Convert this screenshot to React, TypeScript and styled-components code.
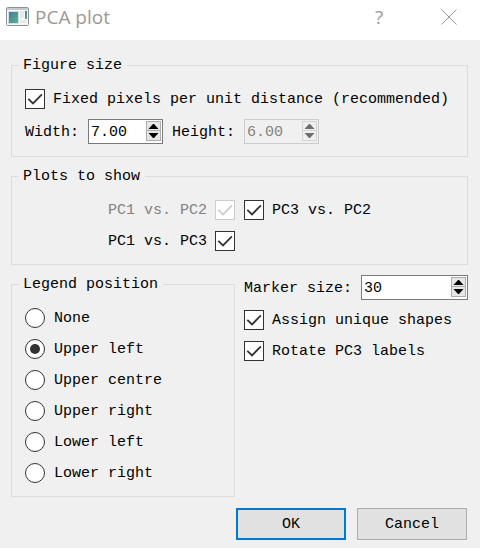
import React from "react";
import styled, { createGlobalStyle } from "styled-components";

const GlobalStyle = createGlobalStyle`
  *, *::before, *::after { box-sizing: border-box; }
  html { background: #f0f0f0; }
  body {
    margin: 0;
    background: #f0f0f0;
    color: #000;
    font-family: "Liberation Mono", monospace;
    font-size: 15px;
    line-height: 18px;
  }
`;

const TitleBar = styled.header`
  display: flex;
  align-items: center;
  height: 40px;
  padding: 0 23px 6px 6px;
  background: #fff;
  color: #999;
`;

const Title = styled.h1`
  flex: 1;
  margin: 0 0 0 6px;
  font: 400 19px/28px "Open Sans", sans-serif;
`;

const TitleButton = styled.button`
  display: flex;
  align-items: center;
  justify-content: center;
  width: 16px;
  height: 28px;
  margin-left: 54px;
  padding: 0;
  border: 0;
  background: none;
  color: #999;
  font: 400 19px/28px "Open Sans", sans-serif;
`;

const Form = styled.form`
  display: flex;
  flex-direction: column;
  gap: 10px;
  padding: 16px 12px 8px 11px;
`;

const Group = styled.fieldset<{ $bottom: number }>`
  min-width: 0;
  margin: 0;
  padding: 15px 13px ${(p) => p.$bottom}px;
  border: 1px solid #dcdcdc;
`;

const GroupTitle = styled.legend`
  margin-left: -6px;
  padding: 2px 5px 0 4px;
  line-height: 16px;
`;

const Stack = styled.div<{ $gap: number }>`
  display: flex;
  flex-direction: column;
  gap: ${(p) => p.$gap}px;
`;

const FieldRow = styled.div`
  display: flex;
  align-items: center;
  gap: 9px;
`;

const FieldLabel = styled.label`
  padding-top: 2px;
`;

const Columns = styled.div`
  display: grid;
  grid-template-columns: 1fr 1fr;
  column-gap: 9px;
  align-items: start;
`;

const PlotGrid = styled(Columns)`
  row-gap: 11px;
`;

const Choice = styled.label<{ $end?: boolean; $disabled?: boolean }>`
  display: flex;
  align-items: center;
  justify-content: ${(p) => (p.$end ? "flex-end" : "flex-start")};
  gap: 8px;
  height: 20px;
  white-space: nowrap;
  color: ${(p) => (p.$disabled ? "#838383" : "#000")};
`;

const RadioChoice = styled(Choice)`
  gap: 9px;
`;

const ChoiceText = styled.span`
  padding-top: 2px;
`;

const Mark = styled.span`
  display: grid;
  flex: none;
  width: 20px;
  height: 20px;

  > * {
    grid-area: 1 / 1;
  }

  > svg {
    pointer-events: none;
    visibility: hidden;
  }

  > input:checked + svg {
    visibility: visible;
  }
`;

const CheckInput = styled.input`
  appearance: none;
  width: 20px;
  height: 20px;
  margin: 0;
  border: 1px solid #333;
  background: #fff;

  &:disabled {
    border-color: #ccc;
  }
`;

const RadioInput = styled.input`
  appearance: none;
  display: grid;
  place-content: center;
  flex: none;
  width: 20px;
  height: 20px;
  margin: 0;
  border: 1px solid #333;
  border-radius: 50%;
  background: #fff;

  &:checked::before {
    content: "";
    width: 10px;
    height: 10px;
    border-radius: 50%;
    background: #333;
  }
`;

const SpinFrame = styled.span<{ $grow?: boolean; $disabled?: boolean }>`
  display: flex;
  flex: ${(p) => (p.$grow ? "1" : "none")};
  width: ${(p) => (p.$grow ? "auto" : "75px")};
  min-width: 0;
  height: 25px;
  padding: 1px 1px 2px 2px;
  border: 1px solid ${(p) => (p.$disabled ? "#ccc" : "#7a7a7a")};
  background: ${(p) => (p.$disabled ? "#f0f0f0" : "#fff")};
`;

const SpinInput = styled.input`
  appearance: textfield;
  flex: 1;
  width: 0;
  min-width: 0;
  margin: 0;
  padding: 4px 0 0;
  border: 0;
  outline: 0;
  background: transparent;
  color: #000;
  font: inherit;

  &::-webkit-inner-spin-button {
    appearance: none;
    margin: 0;
  }

  &:disabled {
    color: #838383;
  }
`;

const Steppers = styled.span`
  display: grid;
  grid-template-rows: 1fr 1fr;
  width: 15px;
`;

const Stepper = styled.button`
  display: grid;
  place-content: center;
  min-height: 0;
  padding: 0;
  border: 1px solid #adadad;
  background: #e6e6e6;
  color: #000;

  & + & {
    border-top: 0;
  }

  &:disabled {
    border-color: #d4d4d4;
    background: #efefef;
    color: #6d6d6d;
  }
`;

const Actions = styled.div`
  display: flex;
  justify-content: flex-end;
  gap: 11px;
  padding: 1px 1px 0 0;
`;

const ActionButton = styled.button<{ $primary?: boolean }>`
  width: 110px;
  height: 32px;
  padding: 2px 0 0;
  border: ${(p) => (p.$primary ? "2px solid #0078d7" : "1px solid #adadad")};
  background: #e1e1e1;
  color: #000;
  font: inherit;
`;

function WindowIcon() {
  return (
    <svg width="23" height="20" viewBox="0 0 23 20" aria-hidden="true">
      <defs>
        <linearGradient id="pane" x1="0" y1="0" x2="1" y2="1">
          <stop offset="0" stopColor="#3d79a0" />
          <stop offset="1" stopColor="#62b489" />
        </linearGradient>
      </defs>
      <rect x="0.5" y="0.5" width="22" height="18" rx="1" fill="#f8f8f8" stroke="#8b9199" />
      <rect x="1" y="1" width="21" height="2" fill="#c3c9cf" />
      <rect x="2.5" y="4.5" width="10" height="12" fill="url(#pane)" stroke="#d3e0e0" />
      <rect x="14" y="4" width="4" height="7" fill="#e8eae6" />
      <rect x="19" y="4" width="2" height="8" fill="url(#pane)" />
      <rect x="14" y="13" width="7" height="3" fill="#e8eae6" />
    </svg>
  );
}

function Checkbox({ label, before, disabled }: { label: string; before?: boolean; disabled?: boolean }) {
  return (
    <Choice $end={before} $disabled={disabled}>
      {before && <ChoiceText>{label}</ChoiceText>}
      <Mark>
        <CheckInput type="checkbox" defaultChecked disabled={disabled} />
        <svg width="20" height="20" viewBox="0 0 20 20" fill="none" stroke={disabled ? "#ccc" : "#333"} strokeWidth="1.8">
          <path d="M3.3 9.8 L8 14.4 L16.9 5.4" />
        </svg>
      </Mark>
      {!before && <ChoiceText>{label}</ChoiceText>}
    </Choice>
  );
}

type SpinProps = { id: string; value: string; step: string; disabled?: boolean; grow?: boolean };

function SpinBox({ id, value, step, disabled, grow }: SpinProps) {
  const input = React.useRef<HTMLInputElement>(null);
  return (
    <SpinFrame $grow={grow} $disabled={disabled}>
      <SpinInput ref={input} id={id} type="number" step={step} defaultValue={value} disabled={disabled} />
      <Steppers>
        <Stepper type="button" aria-label="Increase" disabled={disabled} onClick={() => input.current?.stepUp()}>
          <svg width="11" height="5" viewBox="0 0 11 5">
            <path d="M0.5 5 L5 0 H6 L10.5 5 Z" fill="currentColor" />
          </svg>
        </Stepper>
        <Stepper type="button" aria-label="Decrease" disabled={disabled} onClick={() => input.current?.stepDown()}>
          <svg width="11" height="5" viewBox="0 0 11 5">
            <path d="M0.5 0 L5 5 H6 L10.5 0 Z" fill="currentColor" />
          </svg>
        </Stepper>
      </Steppers>
    </SpinFrame>
  );
}

const positions = ["None", "Upper left", "Upper centre", "Upper right", "Lower left", "Lower right"];

export default function App() {
  return (
    <>
      <GlobalStyle />
      <TitleBar>
        <WindowIcon />
        <Title>PCA plot</Title>
        <TitleButton type="button">?</TitleButton>
        <TitleButton type="button" aria-label="Close">
          <svg width="16" height="16" viewBox="0 0 16 16" stroke="currentColor" strokeWidth="1">
            <path d="M0.5 0.5 L15.5 15.5 M15.5 0.5 L0.5 15.5" />
          </svg>
        </TitleButton>
      </TitleBar>
      <Form onSubmit={(e) => e.preventDefault()}>
        <Group $bottom={12}>
          <GroupTitle>Figure size</GroupTitle>
          <Stack $gap={10}>
            <Checkbox label="Fixed pixels per unit distance (recommended)" />
            <FieldRow>
              <FieldLabel htmlFor="width">Width:</FieldLabel>
              <SpinBox id="width" value="7.00" step="0.01" />
              <FieldLabel htmlFor="height">Height:</FieldLabel>
              <SpinBox id="height" value="6.00" step="0.01" disabled />
            </FieldRow>
          </Stack>
        </Group>
        <Group $bottom={13}>
          <GroupTitle>Plots to show</GroupTitle>
          <PlotGrid>
            <Checkbox label="PC1 vs. PC2" before disabled />
            <Checkbox label="PC3 vs. PC2" />
            <Checkbox label="PC1 vs. PC3" before />
          </PlotGrid>
        </Group>
        <Columns>
          <Group $bottom={13}>
            <GroupTitle>Legend position</GroupTitle>
            <Stack $gap={11}>
              {positions.map((name) => (
                <RadioChoice key={name}>
                  <RadioInput type="radio" name="legend" defaultChecked={name === "Upper left"} />
                  <ChoiceText>{name}</ChoiceText>
                </RadioChoice>
              ))}
            </Stack>
          </Group>
          <Stack $gap={10}>
            <FieldRow>
              <FieldLabel htmlFor="marker">Marker size:</FieldLabel>
              <SpinBox id="marker" value="30" step="1" grow />
            </FieldRow>
            <Stack $gap={11}>
              <Checkbox label="Assign unique shapes" />
              <Checkbox label="Rotate PC3 labels" />
            </Stack>
          </Stack>
        </Columns>
        <Actions>
          <ActionButton type="submit" $primary>OK</ActionButton>
          <ActionButton type="button">Cancel</ActionButton>
        </Actions>
      </Form>
    </>
  );
}
